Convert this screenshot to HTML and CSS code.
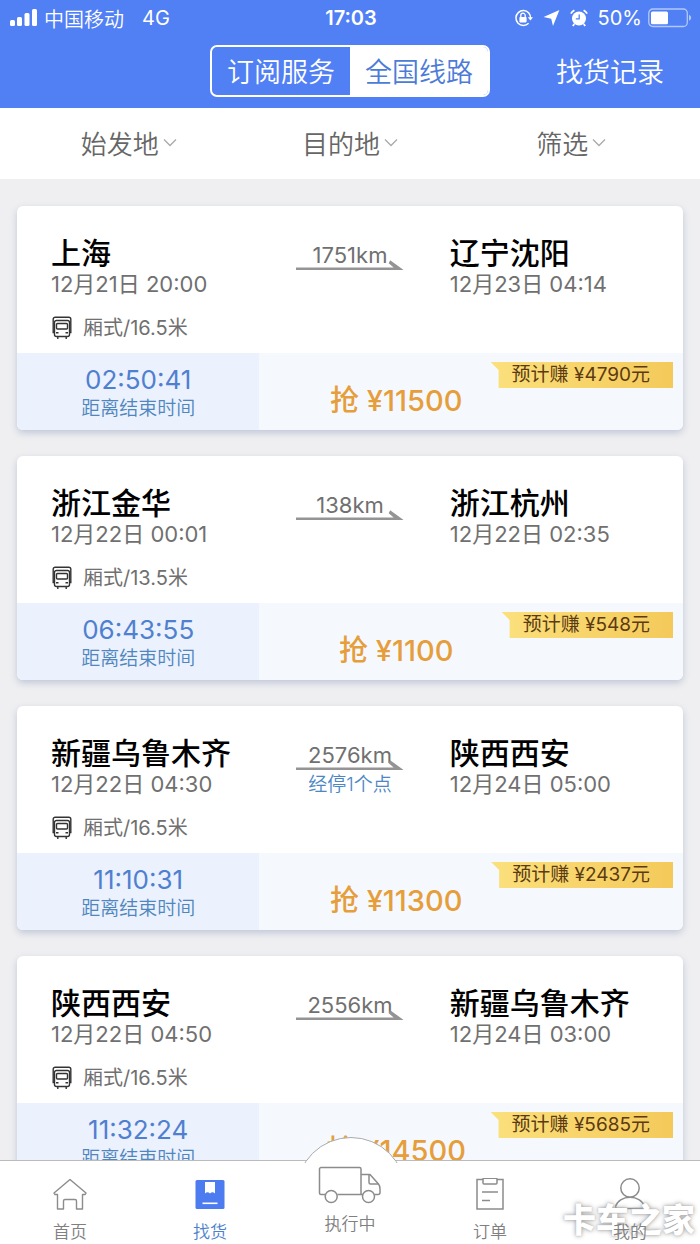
FILE: index.html
```html
<!DOCTYPE html>
<html lang="zh-CN">

<head>
  <meta charset="UTF-8">
  <meta name="viewport" content="width=device-width, initial-scale=1.0">
  <title>找货</title>
  <link rel="stylesheet" href="styles.css">
</head>

<body>

  <!-- shared icons -->
  <svg class="sprite" aria-hidden="true">
    <symbol id="chevron" viewBox="0 0 14 10">
      <path d="M1 1.5l6 6 6-6" fill="none" stroke="#aaa" stroke-width="1.3" />
    </symbol>
    <symbol id="arrow" viewBox="0 0 108 11">
      <path d="M0 8.4h98L93 4.2 94.5 1.2 108 11H0z" fill="#949494" />
    </symbol>
    <symbol id="truckBack" viewBox="0 0 21 24">
      <g fill="none" stroke="#333" stroke-width="1.4">
        <path d="M3 16.5H1.7V3.2a2 2 0 0 1 2-2h13.6a2 2 0 0 1 2 2v13.3H18" />
        <path d="M3 16V6.5a2 2 0 0 1 2-2h11a2 2 0 0 1 2 2V16v2.5a2 2 0 0 1-2 2H5a2 2 0 0 1-2-2z" />
        <rect x="5" y="7.5" width="11" height="5.5" rx="1" />
        <path d="M4.5 16.8h2.5M14 16.8h2.5M6.3 20.5v2.5M14.7 20.5v2.5" />
      </g>
    </symbol>
  </svg>

  <header class="header">
    <div class="statusBar">
      <div class="statusLeft">
        <svg width="28" height="18" viewBox="0 0 28 18" fill="#fff">
          <rect x="0" y="11" width="5" height="6" rx="1.5" />
          <rect x="7" y="8" width="5" height="9" rx="1.5" />
          <rect x="14.5" y="4" width="5" height="13" rx="1.5" />
          <rect x="22" y="0" width="5" height="17" rx="1.5" />
        </svg>
        <span>中国移动</span>
        <span class="network">4G</span>
      </div>
      <div class="clock">17:03</div>
      <div class="statusRight">
        <svg width="19" height="18" viewBox="0 0 19 18">
          <path d="M14.8 4A7.4 7.4 0 1 0 14.6 14.2M14.8 4a7.4 7.4 0 0 1 1.7 5" fill="none" stroke="#fff" stroke-width="1.5" />
          <path d="M13.8 8.2h5.2l-2.6 3.2z" fill="#fff" />
          <rect x="5.4" y="8" width="7.2" height="5.4" rx=".8" fill="#fff" />
          <path d="M6.8 8.2V6.4a2.2 2.2 0 0 1 4.4 0v1.8" fill="none" stroke="#fff" stroke-width="1.3" />
        </svg>
        <svg width="17" height="18" viewBox="0 0 17 18">
          <path d="M16.4 1L10 17l-1.8-7.2L.6 8z" fill="#fff" />
        </svg>
        <svg width="18" height="18" viewBox="0 0 18 18">
          <circle cx="9" cy="9.5" r="7" fill="#fff" />
          <path d="M.9 4.6a9 9 0 0 1 3.5-3.4M17.1 4.6a9 9 0 0 0-3.5-3.4M4.3 15l-1.5 2M13.7 15l1.5 2" stroke="#fff" stroke-width="1.8" fill="none" />
          <path d="M9.2 5.4v4.4H5.8" stroke="#5180f5" stroke-width="1.3" fill="none" />
        </svg>
        <span>50%</span>
        <svg width="44" height="20" viewBox="0 0 44 20">
          <rect x=".8" y="1" width="38.5" height="17.5" rx="4" fill="none" stroke="#b3c7fb" stroke-width="1.3" />
          <rect x="3" y="3.4" width="17" height="12.8" rx="1.5" fill="#fff" />
          <path d="M41 6.8q2.2 1 2.2 3t-2.2 3z" fill="#b3c7fb" />
        </svg>
      </div>
    </div>

    <div class="navBar">
      <div class="segment">
        <button type="button" class="segmentBtn">订阅服务</button>
        <button type="button" class="segmentBtn active">全国线路</button>
      </div>
      <a href="#" class="recordLink">找货记录</a>
    </div>
  </header>

  <div class="filterBar">
    <button type="button" class="filterBtn">始发地<svg class="chevron"><use href="#chevron" /></svg></button>
    <button type="button" class="filterBtn">目的地<svg class="chevron"><use href="#chevron" /></svg></button>
    <button type="button" class="filterBtn">筛选<svg class="chevron"><use href="#chevron" /></svg></button>
  </div>

  <main class="cargoList">
    <article class="card">
      <div class="cardBody">
        <div class="line">
          <div>
            <h2 class="city">上海</h2>
            <p class="date">12月21日 20:00</p>
          </div>
          <div class="route">
            <p class="distance">1751km</p>
            <svg class="arrow"><use href="#arrow" /></svg>
          </div>
          <div class="stopTo">
            <h2 class="city">辽宁沈阳</h2>
            <p class="date">12月23日 04:14</p>
          </div>
        </div>
        <p class="truck"><svg class="truckIcon"><use href="#truckBack" /></svg>厢式/16.5米</p>
      </div>
      <div class="cardFoot">
        <div class="timer">
          <p class="timeLeft">02:50:41</p>
          <p class="timeLabel">距离结束时间</p>
        </div>
        <button type="button" class="grabBtn">抢 ¥11500</button>
        <span class="earn">预计赚 ¥4790元</span>
      </div>
    </article>

    <article class="card">
      <div class="cardBody">
        <div class="line">
          <div>
            <h2 class="city">浙江金华</h2>
            <p class="date">12月22日 00:01</p>
          </div>
          <div class="route">
            <p class="distance">138km</p>
            <svg class="arrow"><use href="#arrow" /></svg>
          </div>
          <div class="stopTo">
            <h2 class="city">浙江杭州</h2>
            <p class="date">12月22日 02:35</p>
          </div>
        </div>
        <p class="truck"><svg class="truckIcon"><use href="#truckBack" /></svg>厢式/13.5米</p>
      </div>
      <div class="cardFoot">
        <div class="timer">
          <p class="timeLeft">06:43:55</p>
          <p class="timeLabel">距离结束时间</p>
        </div>
        <button type="button" class="grabBtn">抢 ¥1100</button>
        <span class="earn">预计赚 ¥548元</span>
      </div>
    </article>

    <article class="card">
      <div class="cardBody">
        <div class="line">
          <div>
            <h2 class="city">新疆乌鲁木齐</h2>
            <p class="date">12月22日 04:30</p>
          </div>
          <div class="route">
            <p class="distance">2576km</p>
            <svg class="arrow"><use href="#arrow" /></svg>
            <p class="via">经停1个点</p>
          </div>
          <div class="stopTo">
            <h2 class="city">陕西西安</h2>
            <p class="date">12月24日 05:00</p>
          </div>
        </div>
        <p class="truck"><svg class="truckIcon"><use href="#truckBack" /></svg>厢式/16.5米</p>
      </div>
      <div class="cardFoot">
        <div class="timer">
          <p class="timeLeft">11:10:31</p>
          <p class="timeLabel">距离结束时间</p>
        </div>
        <button type="button" class="grabBtn">抢 ¥11300</button>
        <span class="earn">预计赚 ¥2437元</span>
      </div>
    </article>

    <article class="card">
      <div class="cardBody">
        <div class="line">
          <div>
            <h2 class="city">陕西西安</h2>
            <p class="date">12月22日 04:50</p>
          </div>
          <div class="route">
            <p class="distance">2556km</p>
            <svg class="arrow"><use href="#arrow" /></svg>
          </div>
          <div class="stopTo">
            <h2 class="city">新疆乌鲁木齐</h2>
            <p class="date">12月24日 03:00</p>
          </div>
        </div>
        <p class="truck"><svg class="truckIcon"><use href="#truckBack" /></svg>厢式/16.5米</p>
      </div>
      <div class="cardFoot">
        <div class="timer">
          <p class="timeLeft">11:32:24</p>
          <p class="timeLabel">距离结束时间</p>
        </div>
        <button type="button" class="grabBtn">抢 ¥14500</button>
        <span class="earn">预计赚 ¥5685元</span>
      </div>
    </article>
  </main>

  <nav class="tabBar">
    <a href="#" class="tab">
      <svg width="34" height="34" viewBox="0 0 34 34" fill="none" stroke="#8c8c8c" stroke-width="1.4" stroke-linejoin="round">
        <path d="M17 1.5L1 15l1 1.5h2.5V31h6v-8q0-1.5 1.5-1.5h10q1.5 0 1.5 1.5v8h6V16.5H32l1-1.5z" />
      </svg>
      <span class="tabLabel">首页</span>
    </a>
    <a href="#" class="tab active">
      <svg width="34" height="34" viewBox="0 0 34 34">
        <rect x="2.5" y="2" width="29" height="29" rx="1.5" fill="#4c7cf0" />
        <path d="M12 4h10v11.5q-2.5-2.5-5 0-2.5-2.5-5 0z" fill="#fff" />
        <path d="M9.5 25.3h15" stroke="#fff" stroke-width="1.6" />
      </svg>
      <span class="tabLabel">找货</span>
    </a>
    <a href="#" class="tab running">
      <svg width="64" height="38" viewBox="0 0 64 38" fill="none" stroke="#8c8c8c" stroke-width="1.5" stroke-linejoin="round">
        <path d="M7 28.5H3A1.5 1.5 0 0 1 1.5 27V3A1.5 1.5 0 0 1 3 1.5h38.5A1.5 1.5 0 0 1 43 3v25.5H19.5" />
        <path d="M43 8.5h9l8.5 9.5c1 1.2 1.5 3 1.5 5v3.5q0 2-2 2h-3.5M43 28.5h2" />
        <path d="M51 8.5v8q0 1.5 1.5 1.5h7.5" />
        <circle cx="13.2" cy="30.5" r="6" />
        <circle cx="50.5" cy="30.5" r="6" />
      </svg>
      <span class="tabLabel">执行中</span>
    </a>
    <a href="#" class="tab">
      <svg width="34" height="34" viewBox="0 0 34 34" fill="none" stroke="#8c8c8c" stroke-width="1.5">
        <path d="M10 1.5H4V31h26V1.5h-6" />
        <path d="M11 .2h12q1 0 1 1V5q0 1-1 1H11q-1 0-1-1V1.2q0-1 1-1z" />
        <path d="M9 14h16M9 22.5h8" />
      </svg>
      <span class="tabLabel">订单</span>
    </a>
    <a href="#" class="tab">
      <svg width="34" height="34" viewBox="0 0 34 34" fill="none" stroke="#8c8c8c" stroke-width="1.5">
        <circle cx="17" cy="10" r="9.2" />
        <path d="M2.5 28.5C4 23 10 19.2 17 19.2S30 23 31.5 28.5q0 2-2 2h-25q-2 0-2-2" />
      </svg>
      <span class="tabLabel">我的</span>
    </a>
    <span class="watermark">卡车之家</span>
  </nav>

</body>

</html>
```

FILE: styles.css
```css
* {
  box-sizing: border-box;
}

body {
  margin: 0;
  height: 100vh;
  display: flex;
  flex-direction: column;
  background-color: #efeff1;
  color: #666;
  font-family: Inter, "Noto Sans CJK SC", sans-serif;
  font-weight: 350;
}

h2,
p {
  margin: 0;
}

a {
  text-decoration: none;
}

button {
  border: none;
  background: none;
  padding: 0;
  font: inherit;
  color: inherit;
}

svg {
  display: block;
  flex: none;
}

.sprite {
  position: absolute;
  width: 0;
  height: 0;
}

/* header */
.header {
  flex: none;
  background-color: #5180f5;
  color: #fff;
}

.statusBar {
  display: grid;
  grid-template-columns: 1fr auto 1fr;
  align-items: center;
  height: 36px;
  padding: 0 8px 0 10px;
  font-size: 20px;
}

.statusLeft,
.statusRight {
  display: flex;
  align-items: center;
  gap: 6px;
}

.statusRight {
  justify-content: flex-end;
  gap: 10px;
  font-weight: 400;
}

.statusRight span {
  margin-right: -4px;
}

.network {
  margin-left: 12px;
  font-weight: 400;
}

.clock {
  font-weight: 600;
}

.navBar {
  display: grid;
  grid-template-columns: 1fr auto 1fr;
  align-items: center;
  height: 72px;
  padding: 0 36px 2px;
  font-size: 27px;
}

.segment {
  grid-column: 2;
  display: flex;
  height: 52px;
  border: 2px solid #fff;
  border-radius: 7px;
  overflow: hidden;
}

.segmentBtn {
  width: 138px;
  padding-bottom: 2px;
}

.segmentBtn.active {
  background-color: #fff;
  color: #4c7cd8;
}

.recordLink {
  justify-self: end;
  padding-bottom: 2px;
  color: #fff;
}

/* filters */
.filterBar {
  flex: none;
  display: grid;
  grid-template-columns: repeat(3, 1fr);
  height: 71px;
  padding: 0 18px 2px;
  background-color: #fff;
  font-size: 26px;
}

.filterBtn {
  display: flex;
  align-items: center;
  justify-content: center;
  gap: 4px;
}

.chevron {
  width: 14px;
  height: 10px;
}

/* list */
.cargoList {
  flex: 1;
  min-height: 0;
  overflow-y: auto;
  scrollbar-width: none;
  padding: 27px 17px;
}

.card {
  border-radius: 6px;
  background-color: #fff;
  box-shadow: 0 3px 7px rgba(90, 105, 160, 0.3);
  overflow: hidden;
  margin-bottom: 26px;
}

.cardBody {
  padding: 30px 34px 11px;
}

.line {
  display: grid;
  grid-template-columns: 41% 18% 1fr;
}

.city {
  font-size: 30px;
  line-height: 34px;
  font-weight: 500;
  color: #000;
  white-space: nowrap;
}

.date {
  font-size: 22px;
  line-height: 28px;
  font-weight: 400;
  color: #707070;
  white-space: nowrap;
}

.stopTo {
  padding-left: 46px;
}

.route {
  padding-top: 7px;
  height: 62px;
  text-align: center;
}

.distance {
  font-size: 22px;
  line-height: 24px;
  font-weight: 400;
  color: #707070;
}

.arrow {
  width: 100%;
  height: 11px;
  margin-top: -8px;
}

.via {
  font-size: 19px;
  line-height: 30px;
  color: #4c86c4;
}

.truck {
  display: flex;
  align-items: center;
  gap: 10px;
  margin-top: 16px;
  font-size: 20px;
  line-height: 28px;
  font-weight: 400;
  color: #707070;
}

.truckIcon {
  width: 22px;
  height: 24px;
}

.cardFoot {
  position: relative;
  display: flex;
  height: 77px;
  background-color: #f5f9fd;
}

.timer {
  width: 36.4%;
  padding-top: 13px;
  background-color: #ebf1fd;
  text-align: center;
}

.timeLeft {
  font-size: 26px;
  line-height: 28px;
  font-weight: 400;
  color: #4f80d0;
}

.timeLabel {
  font-size: 19px;
  line-height: 30px;
  color: #4f86bd;
}

.grabBtn {
  flex: 1;
  padding: 12px 150px 0 0;
  font-size: 29px;
  font-weight: 500;
  color: #e69e3c;
}

.earn {
  position: absolute;
  top: 9px;
  right: 10px;
  padding: 0 23px 0 21px;
  font-size: 19px;
  line-height: 26px;
  font-weight: 400;
  color: #5c3b12;
  background: linear-gradient(90deg, #fbe07c, #f4c95a);
  clip-path: polygon(0 0, 100% 0, 100% 100%, 8px 100%, 8px 8px);
}

/* bottom tabs */
.tabBar {
  position: relative;
  flex: none;
  display: grid;
  grid-template-columns: repeat(5, 1fr);
  height: 84px;
  border-top: 1px solid #bbb;
  background-color: #fff;
}

.tab {
  display: flex;
  flex-direction: column;
  align-items: center;
  padding-top: 17px;
  color: #808080;
  font-size: 17px;
  line-height: 24px;
}

.tabLabel {
  position: relative;
  z-index: 2;
  margin-top: 8px;
}

.tab.active {
  color: #4a80cc;
}

.running {
  position: relative;
  padding-top: 5px;
}

.running::before {
  content: "";
  position: absolute;
  top: -24px;
  left: 50%;
  width: 108px;
  height: 108px;
  margin-left: -54px;
  border: 1px solid #aaa;
  border-radius: 50%;
  background-color: #fff;
  clip-path: inset(0 0 84px 0);
}

.running svg {
  position: relative;
}

.watermark {
  position: absolute;
  right: 5px;
  bottom: 4px;
  z-index: 1;
  font-size: 33px;
  line-height: 40px;
  font-weight: 900;
  color: #fff;
  text-shadow: 0 0 5px #999, 0 0 2px #ccc;
}
```
